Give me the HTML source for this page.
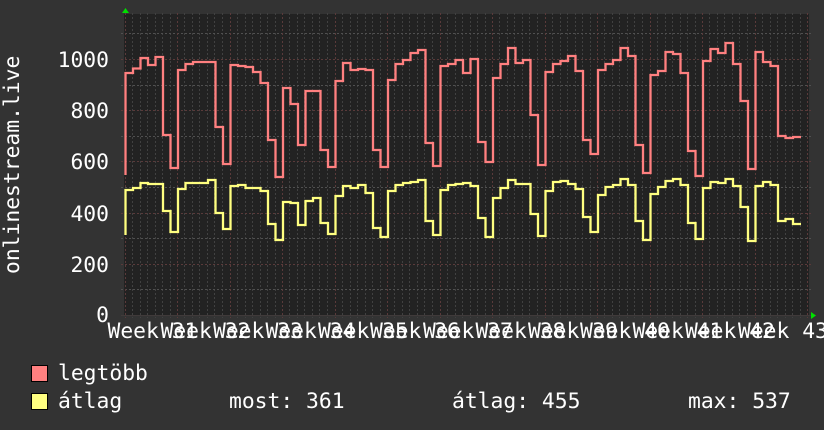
<!DOCTYPE html>
<html><head><meta charset="utf-8"><style>
html,body{margin:0;padding:0;background:#333;width:824px;height:430px;overflow:hidden}
svg{display:block}
text{font-family:"DejaVu Sans Mono","Liberation Mono",monospace;font-size:21.33px;fill:#fff}
</style></head><body>
<svg width="824" height="430" viewBox="0 0 824 430" xmlns="http://www.w3.org/2000/svg">
<rect width="824" height="430" fill="#333"/>
<rect x="124" y="14" width="685" height="301" fill="#222"/>
<defs><path id="w" d="M7.5 13V318M15.5 13V318M22.5 13V318M30.5 13V318M37.5 13V318M45.5 13V318"/></defs>
<g stroke="#414141" stroke-width="1" stroke-dasharray="2 2" fill="none">
<use href="#w" x="125"/><use href="#w" x="177"/><use href="#w" x="230"/><use href="#w" x="282"/><use href="#w" x="335"/><use href="#w" x="387"/><use href="#w" x="440"/><use href="#w" x="492"/><use href="#w" x="545"/><use href="#w" x="597"/><use href="#w" x="650"/><use href="#w" x="702"/><use href="#w" x="755"/>
<path stroke="#505050" stroke-dasharray="2 2" d="M121 33.5H811M121 85.5H811M121 136.5H811M121 187.5H811M121 238.5H811M121 289.5H811"/>
</g>
<g stroke="#5a3a3a" stroke-width="1" stroke-dasharray="2 2" fill="none">
<path d="M121 59.5H811M121 110.5H811M121 161.5H811M121 213.5H811M121 264.5H811"/>
<path d="M125.5 13V318M177.5 13V318M230.5 13V318M282.5 13V318M335.5 13V318M387.5 13V318M440.5 13V318M492.5 13V318M545.5 13V318M597.5 13V318M650.5 13V318M702.5 13V318M755.5 13V318M807.5 13V318"/>
</g>
<path d="M121 315.5H811" stroke="#403a3a" stroke-width="1" fill="none"/>
<path d="M125.5 175V73H133V68.5H140.5V58H148V65H155.5V57H163V135H170.5V168H178V70H185.5V64H193V62H200.5V62H208V62H215.5V127H223V164H230.5V65H238V66H245.5V67H253V72H260.5V83H268V140H275.5V177H283V88H290.5V104H298V145H305.5V91H313V91H320.5V150H328V167H335.5V81H343V63H350.5V70H358V69H365.5V70H373V150H380.5V167H388V80H395.5V64H403V60H410.5V53H418V50H425.5V143H433V166H440.5V66H448V64H455.5V60H463V73H470.5V59H478V142H485.5V162H493V78H500.5V64H508V48H515.5V63H523V60H530.5V115H538V165H545.5V72H553V64H560.5V61H568V56H575.5V71H583V140H590.5V154H598V70H605.5V64H613V60H620.5V48H628V56H635.5V145H643V173H650.5V75H658V71H665.5V52H673V54H680.5V73H688V151H695.5V176H703V61H710.5V49H718V53H725.5V43H733V64H740.5V101H748V169H755.5V52H763V62H770.5V66H778V136H785.5V138H793V137H801" fill="none" stroke="#ff8080" stroke-width="2.3"/>
<path d="M125.5 235V190H133V188H140.5V183H148V184H155.5V184H163V211H170.5V232H178V189H185.5V183H193V183H200.5V183H208V180H215.5V213H223V229H230.5V186H238V185H245.5V188H253V188H260.5V191H268V224H275.5V240H283V202H290.5V203H298V225H305.5V201H313V198H320.5V223H328V234H335.5V196H343V186H350.5V188H358V185H365.5V193H373V228H380.5V237H388V191H395.5V185H403V183H410.5V182H418V180H425.5V221H433V235H440.5V190H448V185H455.5V184H463V183H470.5V186H478V218H485.5V237H493V198H500.5V188H508V180H515.5V184H523V184H530.5V214H538V236H545.5V191H553V182H560.5V181H568V184H575.5V189H583V217H590.5V232H598V195H605.5V187H613V185H620.5V179H628V185H635.5V221H643V240H650.5V194H658V187H665.5V181H673V179H680.5V185H688V223H695.5V239H703V188H710.5V182H718V183H725.5V179H733V186H740.5V207H748V241H755.5V186H763V182H770.5V185H778V221H785.5V219H793V224H801" fill="none" stroke="#ffff80" stroke-width="2.3"/>
<path d="M125.5 8L122 13H129Z" fill="#00e000"/>
<path d="M816 315.5L811 312V319Z" fill="#00e000"/>
<g text-anchor="end">
<text x="109" y="67">1000</text>
<text x="109" y="118">800</text>
<text x="109" y="169">600</text>
<text x="109" y="221">400</text>
<text x="109" y="272">200</text>
<text x="109" y="322">0</text>
</g>
<text transform="translate(19 274) rotate(-90)">onlinestream.live</text>
<text x="107.5" y="338">Week 31</text>
<text x="160.5" y="338">Week 32</text>
<text x="213" y="338">Week 33</text>
<text x="265.5" y="338">Week 34</text>
<text x="318" y="338">Week 35</text>
<text x="370" y="338">Week 36</text>
<text x="423" y="338">Week 37</text>
<text x="475.5" y="338">Week 38</text>
<text x="528" y="338">Week 39</text>
<text x="580" y="338">Week 40</text>
<text x="632.5" y="338">Week 41</text>
<text x="685" y="338">Week 42</text>
<text x="738" y="338">Week 43</text>
<rect x="31.5" y="365.5" width="16" height="16" fill="#ff8080" stroke="#000"/>
<rect x="31.5" y="393.5" width="16" height="16" fill="#ffff80" stroke="#000"/>
<text x="58" y="380">legtöbb</text>
<text x="58" y="408">átlag</text>
<text x="229" y="408">most: 361</text>
<text x="452" y="408">átlag: 455</text>
<text x="688" y="408">max: 537</text>
</svg>
</body></html>
